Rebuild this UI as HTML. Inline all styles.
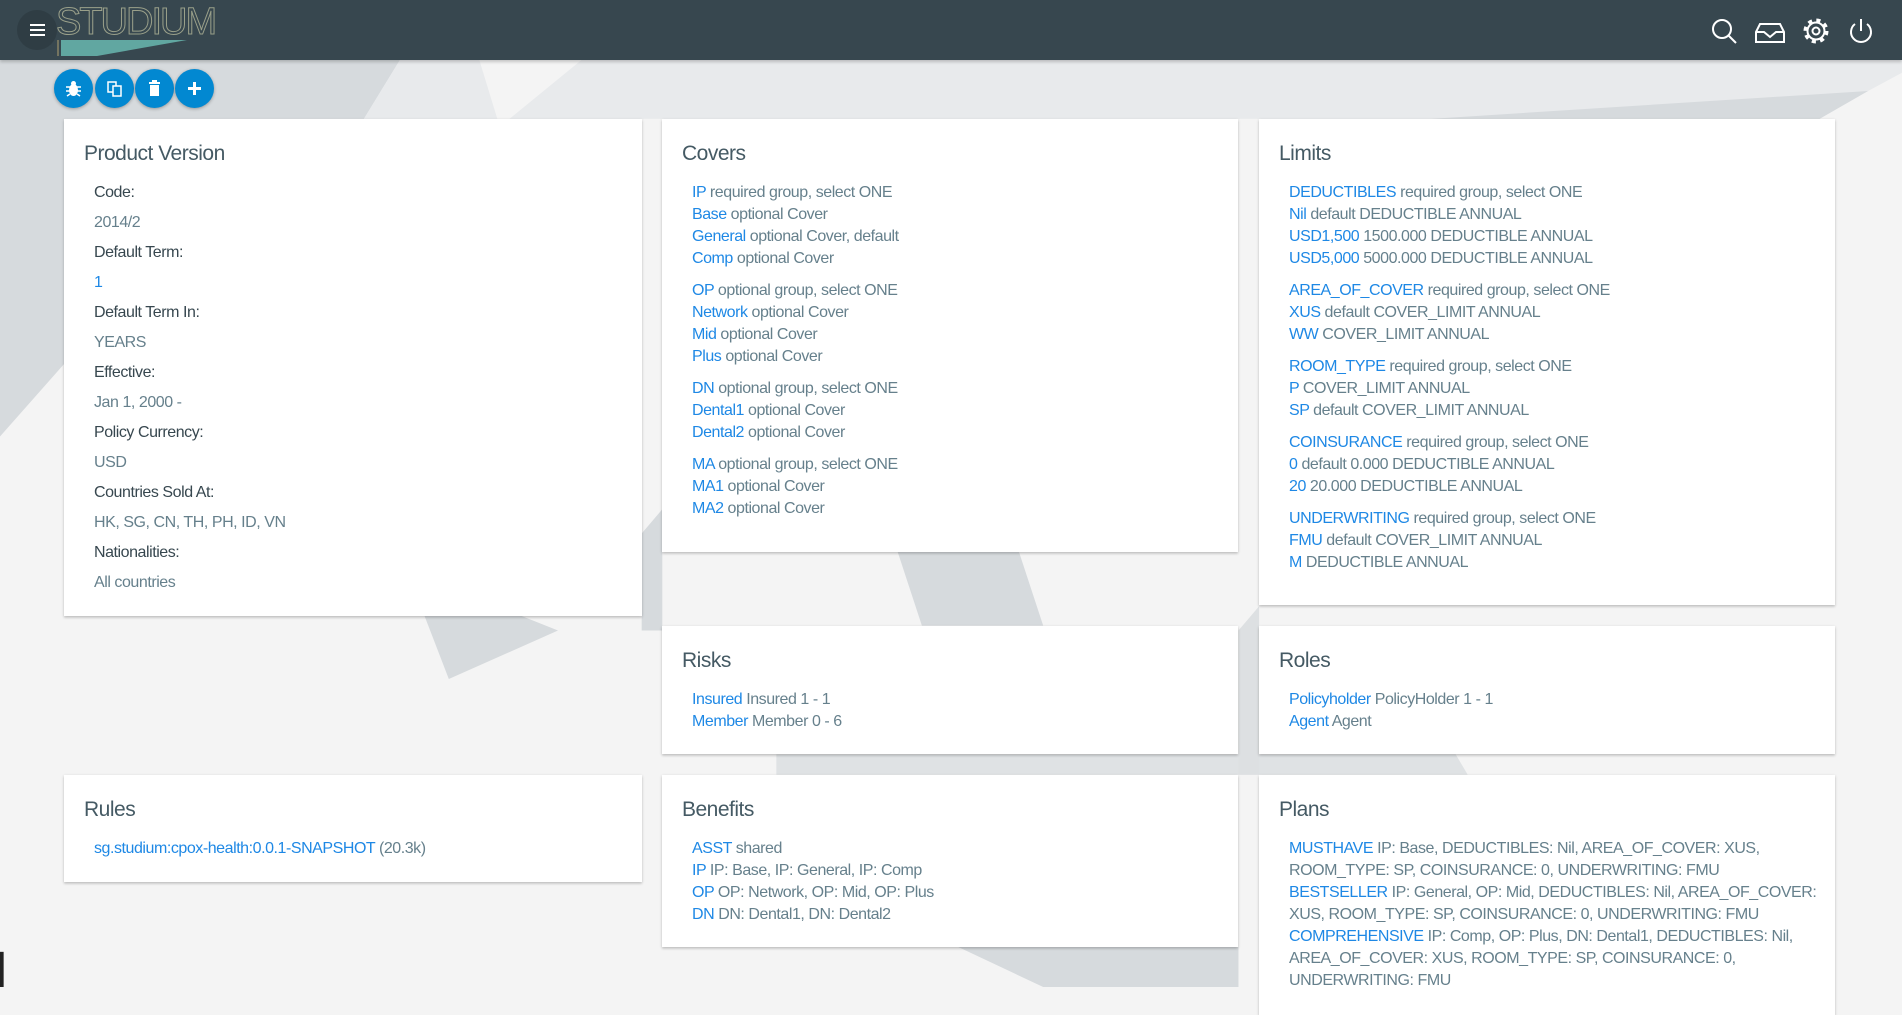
<!DOCTYPE html>
<html><head><meta charset="utf-8">
<style>
*{box-sizing:border-box;margin:0;padding:0}
body{width:1902px;height:987px;overflow:hidden;background:#f4f4f4;font-family:"Liberation Sans",sans-serif;position:relative;color:#607d8b}
#bg{position:absolute;left:0;top:0;width:1902px;height:987px}
header{position:absolute;left:0;top:0;width:1902px;height:60px;background:#37474f;box-shadow:0 2px 3px rgba(0,0,0,.2)}
.burger{position:absolute;left:17px;top:10px;width:40px;height:40px;border-radius:50%;background:#2f3d44}
.burger i{position:absolute;left:13px;width:15px;height:2px;background:#fff}
.logo{position:absolute;left:56px;top:2px;font-size:38px;color:transparent;-webkit-text-stroke:1px #9aa08a;letter-spacing:-2px;font-weight:300;line-height:40px}
.fab{position:absolute;top:69px;width:39px;height:39px;border-radius:50%;background:#0288d1;box-shadow:0 1px 3px rgba(0,0,0,.3)}
.fab svg{position:absolute;left:10px;top:10px}
.card{position:absolute;background:#fff;box-shadow:0 1px 3px rgba(0,0,0,.18),0 2px 2px rgba(0,0,0,.08);padding:0}
.card h2{position:absolute;left:20px;top:23px;font-size:21px;font-weight:normal;color:#455a64;letter-spacing:-.5px}
.body{position:absolute;left:30px;top:63px;right:20px;font-size:16px;line-height:22px;color:#66808c;letter-spacing:-.45px}
.body p{margin-bottom:10px}
a{color:#1e88e5;text-decoration:none}
.pv div{line-height:30px}
.pv .l{color:#37474f}
</style></head><body>
<svg id="bg" viewBox="0 0 1568 814" preserveAspectRatio="none">
<polygon points="0,49 330,49 300,98 53,98 53,300 0,360" fill="#d6dadd"/>
<polygon points="330,49 1568,49 1568,60 1540,75 1500,98 300,98" fill="#e8eaec"/>
<polygon points="395,49 480,49 420,98 410,98" fill="#f4f4f4"/>
<polygon points="1540,75 1500,98 1180,98" fill="#d6dadd"/>
<polygon points="529,440 546,420 546,520 529,520" fill="#d6dadd"/>
<polygon points="350,508 430,508 460,520 370,560" fill="#d6dadd"/>
<polygon points="740,455 840,455 860,516 760,516" fill="#d6dadd"/>
<polygon points="640,622 1200,622 1210,639 640,639" fill="#dfe2e4"/>
<polygon points="1021,520 1038,500 1038,639 1021,639" fill="#dde0e2"/>
<polygon points="790,781 1021,781 1021,814 860,814" fill="#d6dadd"/>
<polygon points="0,785 3,785 3,814 0,814" fill="#222"/>
</svg>
<header>
<div class="burger"><i style="top:14px"></i><i style="top:19px"></i><i style="top:24px"></i></div>
<div class="logo">STUDIUM</div>
<svg style="position:absolute;left:57px;top:38px" width="132" height="20"><polygon points="4,2 130,2 40,18 4,18" fill="#6bbfb5" opacity=".8"/><line x1="1" y1="2" x2="1" y2="18" stroke="#b0a070"/></svg>
<svg style="position:absolute;left:1700px;top:17px" width="190" height="28" fill="none" stroke="#fff" stroke-width="2">
<circle cx="22" cy="12" r="9"/><line x1="28.5" y1="18.5" x2="36" y2="26"/>
<path d="M60 7 h20 l4 8 v10 h-28 v-10 z M56 15 h8 l6 5 l6 -5 h8"/>
<circle cx="116" cy="14" r="3.5"/>
<circle cx="116" cy="14" r="8.5"/>
<circle cx="116" cy="14" r="10.5" stroke-width="4" stroke-dasharray="4 4.25"/>
<path d="M155 7 a10 10 0 1 0 12 0"/><line x1="161" y1="2" x2="161" y2="14"/>
</svg>
</header>
<div class="fab" style="left:54px"><svg width="19" height="19" fill="#fff"><ellipse cx="9.5" cy="11" rx="4.5" ry="6"/><circle cx="9.5" cy="4.5" r="2.5"/><path d="M2 8h15M2 12h15M3 17l3-2M16 17l-3-2" stroke="#fff" stroke-width="1.5"/></svg></div>
<div class="fab" style="left:95px"><svg width="19" height="19" fill="none" stroke="#fff" stroke-width="1.5"><rect x="3" y="3" width="8" height="10"/><rect x="8" y="7" width="8" height="10" fill="#0288d1"/></svg></div>
<div class="fab" style="left:135px"><svg width="19" height="19" fill="#fff"><rect x="4" y="3" width="11" height="2"/><rect x="7" y="1" width="5" height="2"/><rect x="5" y="6" width="9" height="11"/></svg></div>
<div class="fab" style="left:175px"><svg width="19" height="19" fill="#fff"><rect x="8" y="3" width="3" height="13"/><rect x="3" y="8" width="13" height="3"/></svg></div>

<div class="card" style="left:64px;top:119px;width:578px;height:497px"><h2>Product Version</h2>
<div class="body pv" style="left:30px;top:59px">
<div class="l">Code:</div><div>2014/2</div><div class="l">Default Term:</div><div><a>1</a></div><div class="l">Default Term In:</div><div>YEARS</div><div class="l">Effective:</div><div>Jan 1, 2000 -</div><div class="l">Policy Currency:</div><div>USD</div><div class="l">Countries Sold At:</div><div>HK, SG, CN, TH, PH, ID, VN</div><div class="l">Nationalities:</div><div>All countries</div></div></div>

<div class="card" style="left:662px;top:119px;width:576px;height:433px"><h2>Covers</h2>
<div class="body">
<p><a>IP</a> required group, select ONE<br><a>Base</a> optional Cover<br><a>General</a> optional Cover, default<br><a>Comp</a> optional Cover</p>
<p><a>OP</a> optional group, select ONE<br><a>Network</a> optional Cover<br><a>Mid</a> optional Cover<br><a>Plus</a> optional Cover</p>
<p><a>DN</a> optional group, select ONE<br><a>Dental1</a> optional Cover<br><a>Dental2</a> optional Cover</p>
<p><a>MA</a> optional group, select ONE<br><a>MA1</a> optional Cover<br><a>MA2</a> optional Cover</p></div></div>

<div class="card" style="left:1259px;top:119px;width:576px;height:486px"><h2>Limits</h2>
<div class="body">
<p><a>DEDUCTIBLES</a> required group, select ONE<br><a>Nil</a> default DEDUCTIBLE ANNUAL<br><a>USD1,500</a> 1500.000 DEDUCTIBLE ANNUAL<br><a>USD5,000</a> 5000.000 DEDUCTIBLE ANNUAL</p>
<p><a>AREA_OF_COVER</a> required group, select ONE<br><a>XUS</a> default COVER_LIMIT ANNUAL<br><a>WW</a> COVER_LIMIT ANNUAL</p>
<p><a>ROOM_TYPE</a> required group, select ONE<br><a>P</a> COVER_LIMIT ANNUAL<br><a>SP</a> default COVER_LIMIT ANNUAL</p>
<p><a>COINSURANCE</a> required group, select ONE<br><a>0</a> default 0.000 DEDUCTIBLE ANNUAL<br><a>20</a> 20.000 DEDUCTIBLE ANNUAL</p>
<p><a>UNDERWRITING</a> required group, select ONE<br><a>FMU</a> default COVER_LIMIT ANNUAL<br><a>M</a> DEDUCTIBLE ANNUAL</p></div></div>

<div class="card" style="left:662px;top:626px;width:576px;height:128px"><h2>Risks</h2>
<div class="body"><a>Insured</a> Insured 1 - 1<br><a>Member</a> Member 0 - 6</div></div>
<div class="card" style="left:1259px;top:626px;width:576px;height:128px"><h2>Roles</h2>
<div class="body"><a>Policyholder</a> PolicyHolder 1 - 1<br><a>Agent</a> Agent</div></div>

<div class="card" style="left:64px;top:775px;width:578px;height:107px"><h2>Rules</h2>
<div class="body"><a>sg.studium:cpox-health:0.0.1-SNAPSHOT</a> (20.3k)</div></div>
<div class="card" style="left:662px;top:775px;width:576px;height:172px"><h2>Benefits</h2>
<div class="body"><a>ASST</a> shared<br><a>IP</a> IP: Base, IP: General, IP: Comp<br><a>OP</a> OP: Network, OP: Mid, OP: Plus<br><a>DN</a> DN: Dental1, DN: Dental2</div></div>
<div class="card" style="left:1259px;top:775px;width:576px;height:240px"><h2>Plans</h2>
<div class="body" style="right:6px"><a>MUSTHAVE</a> IP: Base, DEDUCTIBLES: Nil, AREA_OF_COVER: XUS, ROOM_TYPE: SP, COINSURANCE: 0, UNDERWRITING: FMU<br><a>BESTSELLER</a> IP: General, OP: Mid, DEDUCTIBLES: Nil, AREA_OF_COVER: XUS, ROOM_TYPE: SP, COINSURANCE: 0, UNDERWRITING: FMU<br><a>COMPREHENSIVE</a> IP: Comp, OP: Plus, DN: Dental1, DEDUCTIBLES: Nil, AREA_OF_COVER: XUS, ROOM_TYPE: SP, COINSURANCE: 0, UNDERWRITING: FMU</div></div>
</body></html>
